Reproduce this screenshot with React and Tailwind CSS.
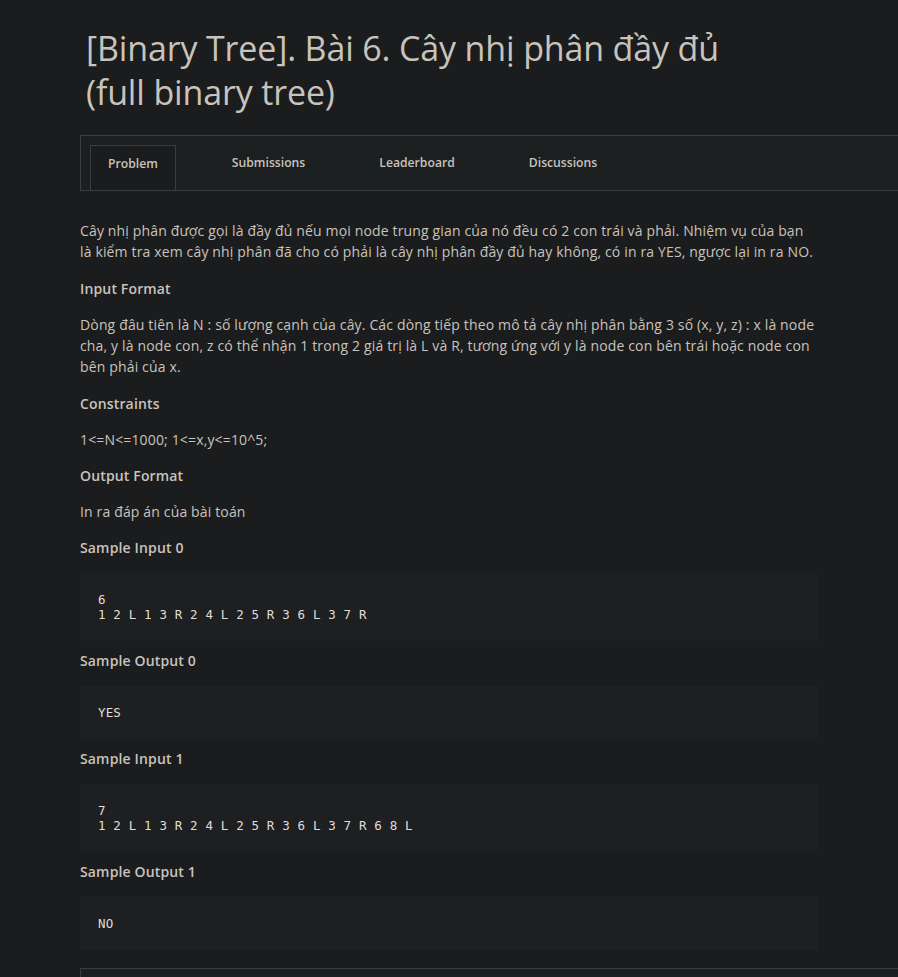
export default function App() {
  const tabs = ['Problem', 'Submissions', 'Leaderboard', 'Discussions'];

  const Heading = ({ children }) => (
    <h3 className="text-[14px] font-semibold text-[#c8c3bc] leading-[21px] mt-[9px] mb-[15px]">{children}</h3>
  );

  const Code = ({ children }) => (
    <pre className="bg-[#1e1f21] text-[#e0ddd8] px-[18px] py-[19px] mb-[8px] font-['DejaVu_Sans_Mono',monospace] text-[12.5px] leading-[15px] whitespace-pre w-[738px]">
      {children}
    </pre>
  );

  return (
    <div className="min-h-screen bg-[#1b1c1e] font-['Open_Sans',sans-serif] text-[#c8c3bc] overflow-hidden">
      <h1 className="pl-[86px] pt-[26px] text-[34px] leading-[44px] text-[#c8c3bc] font-normal tracking-[-0.15px]">
        [Binary Tree]. Bài 6. Cây nhị phân đầy đủ
        <br />
        (full binary tree)
      </h1>

      <div className="ml-[80px] mt-[21px] h-[56px] border border-r-0 border-[#3a3e40] bg-[#1c1f20] flex items-end pl-[9px]">
        {tabs.map((t, i) => (
          <div
            key={t}
            className={`h-[46px] -mb-px pt-[9px] text-[12.2px] leading-[17px] font-semibold text-[#c8c3bc] ${i === 0 ? 'border border-[#3a3e40] bg-[#1b1c1e] px-[17px] mr-[56px]' : 'mr-[74px]'}`}
          >
            {t}
          </div>
        ))}
      </div>

      <div className="pl-[80px] pt-[29px] text-[14px] leading-[21px] tracking-[0.15px]">
        <p className="w-[735px] mb-[16px]">
          Cây nhị phân được gọi là đầy đủ nếu mọi node trung gian của nó đều có 2 con trái và phải. Nhiệm vụ của bạn là kiểm tra xem cây nhị phân đã cho có phải là cây nhị phân đầy đủ hay không, có in ra YES, ngược lại in ra NO.
        </p>
        <Heading>Input Format</Heading>
        <p className="w-[740px] mb-[16px]">
          Dòng đâu tiên là N : số lượng cạnh của cây. Các dòng tiếp theo mô tả cây nhị phân bằng 3 số (x, y, z) : x là node cha, y là node con, z có thể nhận 1 trong 2 giá trị là L và R, tương ứng với y là node con bên trái hoặc node con bên phải của x.
        </p>
        <Heading>Constraints</Heading>
        <p className="mb-[15px]">1&lt;=N&lt;=1000; 1&lt;=x,y&lt;=10^5;</p>
        <Heading>Output Format</Heading>
        <p className="mb-[15px]">In ra đáp án của bài toán</p>
        <Heading>Sample Input 0</Heading>
        <Code>{'6\n1 2 L 1 3 R 2 4 L 2 5 R 3 6 L 3 7 R'}</Code>
        <Heading>Sample Output 0</Heading>
        <Code>YES</Code>
        <Heading>Sample Input 1</Heading>
        <Code>{'7\n1 2 L 1 3 R 2 4 L 2 5 R 3 6 L 3 7 R 6 8 L'}</Code>
        <Heading>Sample Output 1</Heading>
        <Code>NO</Code>
        <div className="mt-[18px] h-[40px] border border-r-0 border-[#3a3e40] bg-[#1c1f20] flex justify-end pt-[8px]">
          <div className="w-[36px] h-[12px] bg-[#35393b]" />
        </div>
      </div>
    </div>
  );
}
